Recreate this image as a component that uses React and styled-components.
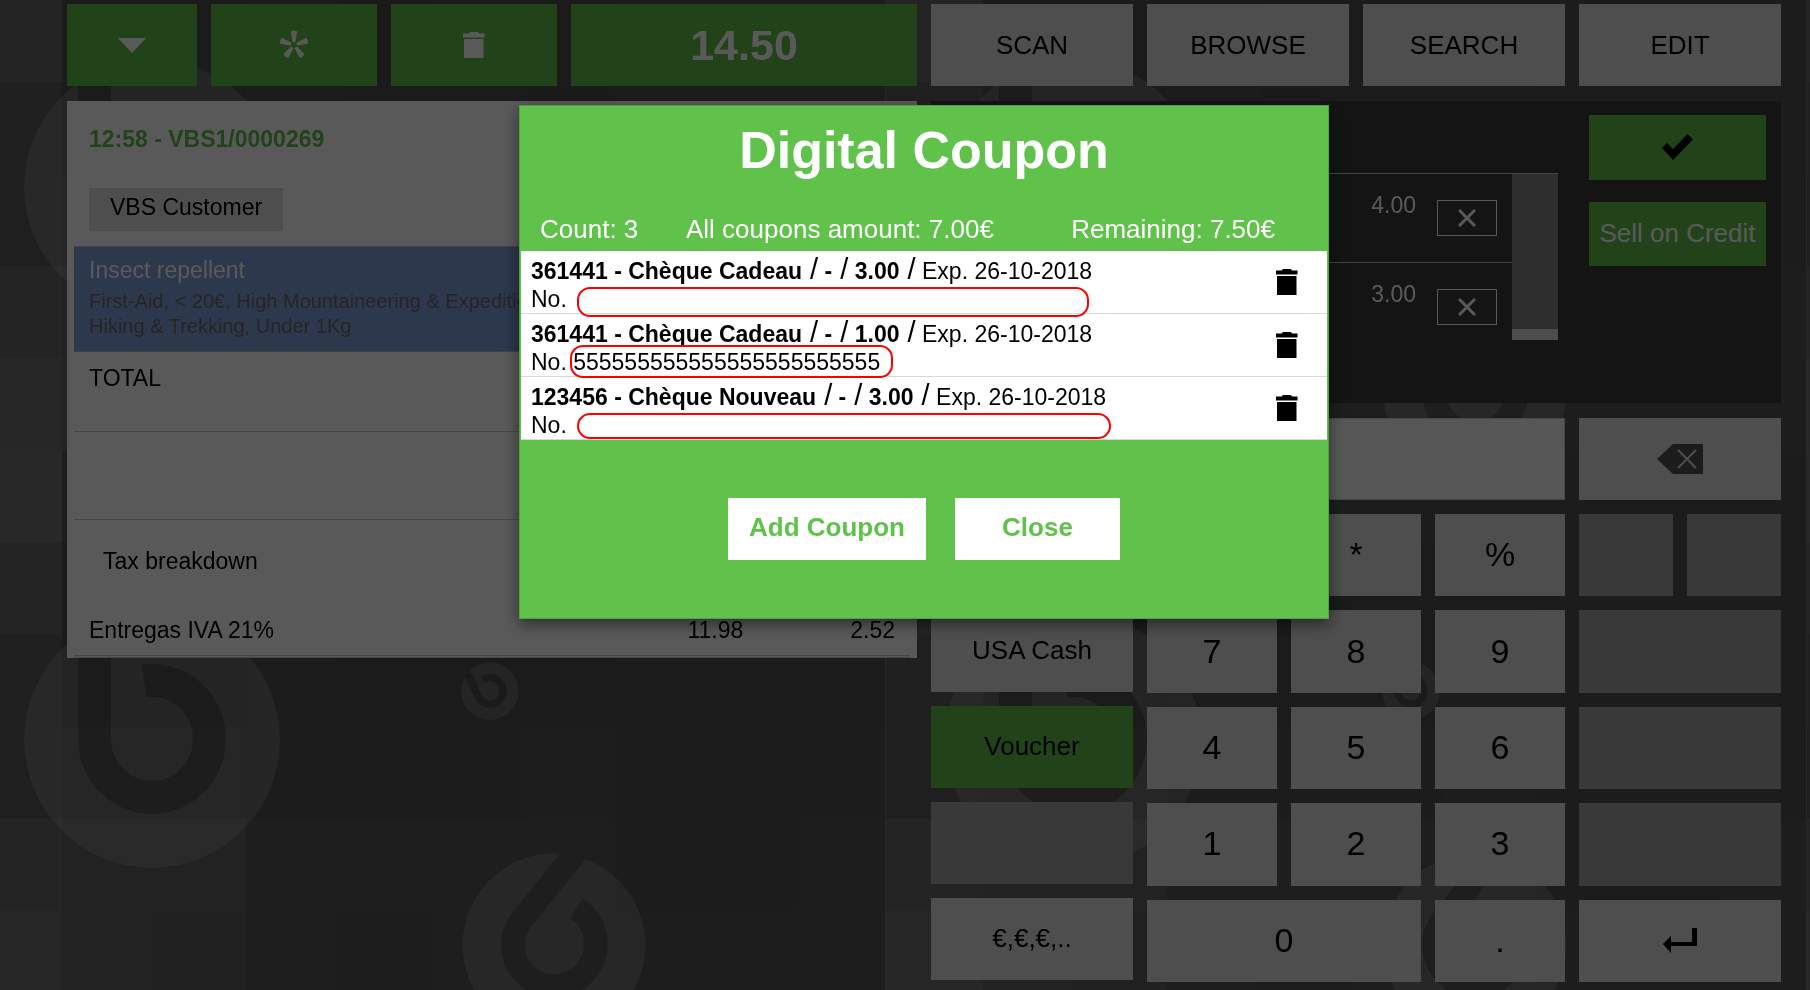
import React from "react";
import styled, { createGlobalStyle, css } from "styled-components";

const tiles = [
  [103, 78, 78, 80, 76, 77, 78, 81, 81, 81],
  [92, 79, 79, 82, 77, 77, 77, 81, 81, 81],
  [89, 84, 84, 80, 81, 81, 84, 81, 81, 82],
  [103, 98, 98, 87, 86, 86, 88, 82, 82, 83],
  [113, 97, 94, 87, 84, 88, 88, 85, 84, 84],
  [114, 84, 84, 82, 82, 80, 80, 81, 81, 82],
];

const columnStarts = [0, 98, 190, 282, 374, 466, 559, 651, 743, 835, 921];
const rowStarts = [0, 92, 184, 276, 368, 461, 553];

const logos = [
  { x: 188, y: 197, scale: 1, rotate: 0 },
  { x: 526, y: 148, scale: 0.226, rotate: -25 },
  { x: 590, y: 402, scale: 0.715, rotate: 39 },
];

const methods = [
  { label: "", muted: true },
  { label: "USA Cash" },
  { label: "Voucher", active: true },
  { label: "", muted: true },
  { label: "€,€,€,.." },
];

const digits = ["", "*", "%", "7", "8", "9", "4", "5", "6", "1", "2", "3"];

const coupons = [
  {
    code: "361441",
    name: "Chèque Cadeau",
    amount: "3.00",
    number: "",
    mark: { left: 56, top: 36, width: 512, height: 30 },
  },
  {
    code: "361441",
    name: "Chèque Cadeau",
    amount: "1.00",
    number: "555555555555555555555555",
    mark: { left: 49, top: 31, width: 323, height: 33 },
  },
  {
    code: "123456",
    name: "Chèque Nouveau",
    amount: "3.00",
    number: "",
    mark: { left: 56, top: 36, width: 534, height: 26 },
  },
];

const Wallpaper = () => (
  <StyledWallpaper aria-hidden="true">
    <defs>
      <mask id="logo-mask">
        <circle r="128" fill="#fff" />
        <path d="M-57.5 -140V0A57.5 58.5 0 1 0 -8 -59" fill="none" stroke="#000" strokeWidth="33" />
      </mask>
      <pattern
        id="tiles"
        width="921"
        height="553"
        patternUnits="userSpaceOnUse"
        patternTransform="translate(-36 -10)"
      >
        {tiles.map((row, r) =>
          row.map((shade, c) => (
            <rect
              key={`${r}-${c}`}
              x={columnStarts[c]}
              y={rowStarts[r]}
              width={columnStarts[c + 1] - columnStarts[c]}
              height={rowStarts[r + 1] - rowStarts[r]}
              fill={`rgb(${shade}, ${shade}, ${shade})`}
            />
          ))
        )}
        <rect width="1" height="553" fill="#707070" />
        {logos.map(({ x, y, scale, rotate }) => (
          <g key={x} transform={`translate(${x} ${y}) rotate(${rotate}) scale(${scale})`}>
            <circle r="128" fill="#fff" fillOpacity="0.15" mask="url(#logo-mask)" />
          </g>
        ))}
      </pattern>
    </defs>
    <rect width="100%" height="100%" fill="url(#tiles)" />
  </StyledWallpaper>
);

const TrashIcon = () => (
  <svg width="22" height="26" viewBox="0 0 22 26" fill="currentColor">
    <path d="M6 1L7 0H15L16 1.500H21.500V5.500H0V1.500H6Z" />
    <path d="M1 7H20.500V26H1Z" />
  </svg>
);

const AsteriskIcon = () => (
  <svg width="28" height="30" viewBox="-14 -15 28 30" fill="currentColor">
    {[0, 72, 144, 216, 288].map((angle) => (
      <path key={angle} d="M-1.500 -3L-3 -13Q-3 -14.500 0 -14.500Q3 -14.500 3 -13L1.500 -3Z" transform={`rotate(${angle})`} />
    ))}
  </svg>
);

const CrossIcon = () => (
  <svg width="18" height="18" viewBox="0 0 18 18" stroke="currentColor" strokeWidth="3">
    <path d="M1 1L17 17M17 1L1 17" />
  </svg>
);

const App = () => {
  return (
    <>
      <GlobalStyle />
      <Wallpaper />
      <Page>
        <Column>
          <ReceiptToolbar>
            <GreenButton aria-label="Menu">
              <svg width="28" height="15" viewBox="0 0 28 15" fill="currentColor">
                <path d="M0 0H28L14 15Z" />
              </svg>
            </GreenButton>
            <GreenButton aria-label="New">
              <AsteriskIcon />
            </GreenButton>
            <GreenButton aria-label="Delete">
              <TrashIcon />
            </GreenButton>
            <GreenButton $total>14.50</GreenButton>
          </ReceiptToolbar>

          <Receipt>
            <ReceiptHeader>
              <ReceiptTitle>12:58 - VBS1/0000269</ReceiptTitle>
              <Customer>VBS Customer</Customer>
            </ReceiptHeader>
            <Product>
              <ProductName>Insect repellent</ProductName>
              <ProductTags>
                First-Aid, &lt; 20€, High Mountaineering &amp; Expedition,
                <br />
                Hiking &amp; Trekking, Under 1Kg
              </ProductTags>
            </Product>
            <Total>TOTAL</Total>
            <Spacer />
            <TaxTitle>Tax breakdown</TaxTitle>
            <TaxTable>
              <tbody>
                <tr>
                  <td>Entregas IVA 21%</td>
                  <td>11.98</td>
                  <td>2.52</td>
                </tr>
              </tbody>
            </TaxTable>
          </Receipt>
        </Column>

        <Column>
          <Tabs>
            <Key>SCAN</Key>
            <Key>BROWSE</Key>
            <Key>SEARCH</Key>
            <Key>EDIT</Key>
          </Tabs>

          <Payment>
            <PaymentLines>
              <PaymentList>
                {["4.00", "3.00"].map((amount) => (
                  <PaymentLine key={amount}>
                    <span>{amount}</span>
                    <RemoveButton aria-label="Remove payment">
                      <CrossIcon />
                    </RemoveButton>
                  </PaymentLine>
                ))}
              </PaymentList>
              <ScrollTrack />
            </PaymentLines>
            <PaymentActions>
              <GreenButton $dark aria-label="Done">
                <svg width="31" height="26" viewBox="0 0 31 26" fill="currentColor">
                  <path d="M0 14L5 9L11 15L25.500 0L31 5.500L11 26Z" />
                </svg>
              </GreenButton>
              <GreenButton>Sell on Credit</GreenButton>
            </PaymentActions>
          </Payment>

          <Keyboard>
            <AmountInput aria-label="Amount" />
            <Key aria-label="Backspace">
              <svg width="46" height="30" viewBox="0 0 46 30">
                <path d="M0 15L16 0H46V30H16Z" fill="#525252" />
                <path d="M21 6L39 24M39 6L21 24" stroke="#dedede" strokeWidth="2" />
              </svg>
            </Key>
            <Methods>
              {methods.map(({ label, muted, active }, i) => (
                <Key key={i} $muted={muted} $active={active}>
                  {label}
                </Key>
              ))}
            </Methods>
            <Digits>
              {digits.map((digit, i) => (
                <Key key={i} $digit>
                  {digit}
                </Key>
              ))}
              <Key $digit $span={2}>
                0
              </Key>
              <Key $digit>.</Key>
            </Digits>
            <Operations>
              <Key $muted />
              <Key $muted />
              <Key $muted $span={2} />
              <Key $muted $span={2} />
              <Key $muted $span={2} />
              <Key $span={2} aria-label="Enter">
                <svg width="34" height="25" viewBox="0 0 34 25">
                  <path d="M8 14H29V0H34V18H8V25L0 16L8 8Z" fill="currentColor" />
                </svg>
              </Key>
            </Operations>
          </Keyboard>
        </Column>
      </Page>

      <Backdrop>
        <Modal role="dialog" aria-modal="true" aria-labelledby="coupon-title">
          <ModalTitle id="coupon-title">Digital Coupon</ModalTitle>
          <Summary>
            <span>Count: 3</span>
            <span>All coupons amount: 7.00€</span>
            <span>Remaining: 7.50€</span>
          </Summary>
          <CouponList>
            {coupons.map(({ code, name, amount, number, mark }, i) => (
              <Coupon key={i}>
                <div>
                  <div>
                    <b>
                      {code} - {name}
                    </b>
                    <Slash> /</Slash> <b>-</b>
                    <Slash> /</Slash> <b>{amount}</b>
                    <Slash> /</Slash> Exp. 26-10-2018
                  </div>
                  <div>No. {number}</div>
                </div>
                <DeleteButton aria-label="Delete coupon">
                  <TrashIcon />
                </DeleteButton>
                <Mark $box={mark} />
              </Coupon>
            ))}
          </CouponList>
          <ModalActions>
            <ModalButton>Add Coupon</ModalButton>
            <ModalButton>Close</ModalButton>
          </ModalActions>
        </Modal>
      </Backdrop>
    </>
  );
};

const GlobalStyle = createGlobalStyle`
  * {
    box-sizing: border-box;
  }

  body {
    margin: 0;
    background: #535353;
    color: #000;
    font-family: "Liberation Sans", Arial, sans-serif;
    font-size: 23px;
    line-height: 28px;
  }

  button,
  input {
    border: 0;
    border-radius: 0;
    padding: 0;
    font: inherit;
    color: inherit;
  }

  svg {
    display: block;
  }
`;

const StyledWallpaper = styled.svg`
  position: fixed;
  inset: 0;
  z-index: -1;
  width: 100%;
  height: 100%;
`;

const Page = styled.main`
  display: grid;
  grid-template-columns: 1fr 1fr;
  gap: 14px;
  padding: 4px 29px 8px 67px;
`;

const Column = styled.section`
  display: flex;
  flex-direction: column;
  gap: 15px;
  min-width: 0;
`;

const buttonBase = css`
  display: flex;
  align-items: center;
  justify-content: center;
  min-width: 0;
  font-size: 26px;
  line-height: 30px;
`;

const GreenButton = styled.button`
  ${buttonBase}
  background: #61bf4b;
  color: ${({ $dark }) => ($dark ? "#000" : "#fff")};

  ${({ $total }) =>
    $total &&
    css`
      font-size: 43px;
      font-weight: bold;
      line-height: 50px;
    `}
`;

const ReceiptToolbar = styled.div`
  display: grid;
  grid-template-columns: 130fr 166fr 166fr 346fr;
  grid-auto-rows: 82px;
  gap: 14px;
`;

const Receipt = styled.div`
  padding: 0 7px;
  background: #fff;
`;

const ReceiptHeader = styled.div`
  display: flex;
  flex-direction: column;
  align-items: flex-start;
  gap: 35px;
  padding: 24px 15px 15px;
`;

const ReceiptTitle = styled.div`
  color: #61bf4b;
  font-weight: bold;
`;

const Customer = styled.button`
  height: 43px;
  padding: 0 21px 5px;
  background: #e0e0e0;
`;

const Product = styled.div`
  height: 106px;
  padding: 9px 15px 0;
  border-top: 1px solid #bbb;
  border-bottom: 1px solid #bbb;
  background: #80a0dc;
  color: #6b6b6b;
`;

const ProductName = styled.div`
  color: #fff;
`;

const ProductTags = styled.div`
  padding-top: 5px;
  font-size: 20px;
  line-height: 25px;
`;

const Total = styled.div`
  height: 80px;
  padding: 12px 15px;
  border-bottom: 1px solid #c8c8c8;
`;

const Spacer = styled.div`
  height: 88px;
  border-bottom: 1px solid #c8c8c8;
`;

const TaxTitle = styled.div`
  padding: 27px 29px 22px;
`;

const TaxTable = styled.table`
  width: 100%;
  border-bottom: 3px double #c8c8c8;
  border-spacing: 0;

  td {
    height: 58px;
    padding: 8px 15px 0;
    text-align: right;
  }

  td:first-child {
    width: 61%;
    text-align: left;
  }
`;

const Tabs = styled.div`
  display: grid;
  grid-template-columns: repeat(4, 1fr);
  grid-auto-rows: 82px;
  gap: 14px;
`;

const Key = styled.button`
  ${buttonBase}
  background: rgba(230, 230, 230, 0.95);
  grid-column: span ${({ $span = 1 }) => $span};

  ${({ $digit }) =>
    $digit &&
    css`
      font-size: 34px;
      line-height: 40px;
    `}

  ${({ $muted }) =>
    $muted &&
    css`
      background: #a4a4a4;
    `}

  ${({ $active }) =>
    $active &&
    css`
      background: #61bf4b;
    `}
`;

const Payment = styled.div`
  display: grid;
  grid-template-columns: 1fr 177px;
  gap: 31px;
  height: 302px;
  padding: 14px 15px 0;
  background: #393939;
`;

const PaymentLines = styled.div`
  display: flex;
  align-self: start;
  height: 167px;
  margin-top: 58px;
  border-top: 1px solid #c8c8c8;
`;

const PaymentList = styled.div`
  flex: 1;
`;

const PaymentLine = styled.div`
  display: flex;
  justify-content: flex-end;
  align-items: flex-start;
  gap: 21px;
  height: 89px;
  padding: 17px 15px 0 0;
  border-bottom: 1px solid #c8c8c8;
  color: #fff;

  &:last-child {
    border-bottom: 0;
  }
`;

const RemoveButton = styled.button`
  display: flex;
  align-items: center;
  justify-content: center;
  width: 60px;
  height: 36px;
  margin-top: 9px;
  border: 1px solid #fff;
  background: none;
`;

const ScrollTrack = styled.div`
  width: 46px;
  border-bottom: 11px solid #dcdcdc;
  background: #848484;
`;

const PaymentActions = styled.div`
  display: grid;
  grid-template-rows: 65px 64px;
  align-content: start;
  gap: 22px;

  button {
    padding-bottom: 2px;
  }
`;

const Keyboard = styled.div`
  display: grid;
  grid-template-columns: repeat(4, 1fr);
  grid-template-rows: 82px 468px;
  gap: 14px;
`;

const AmountInput = styled.input`
  grid-column: span 3;
  width: 100%;
  border: 1px solid #ccc;
  background: rgba(255, 255, 255, 0.97);
`;

const Methods = styled.div`
  display: grid;
  grid-auto-rows: 82px;
  align-content: start;
  gap: 14px;

  button {
    padding-bottom: 2px;
  }
`;

const Digits = styled.div`
  display: grid;
  grid-column: span 2;
  grid-template-columns: repeat(3, 1fr);
  grid-auto-rows: 1fr;
  gap: 14px;

  button {
    padding-bottom: 2px;
  }
`;

const Operations = styled.div`
  display: grid;
  grid-template-columns: 1fr 1fr;
  grid-auto-rows: 1fr;
  gap: 14px;
`;

const Backdrop = styled.div`
  position: fixed;
  inset: 0;
  display: flex;
  align-items: flex-start;
  justify-content: center;
  padding: 105px 29px 0 67px;
  background: rgba(0, 0, 0, 0.65);
`;

const Modal = styled.div`
  width: 810px;
  padding: 14px 1px 58px;
  border: 1px solid #4fa53c;
  background: #60c24a;
  box-shadow: 0 5px 15px rgba(0, 0, 0, 0.5);
`;

const ModalTitle = styled.h1`
  margin: 0;
  color: #fff;
  font-size: 52px;
  line-height: 60px;
  text-align: center;
`;

const Summary = styled.div`
  display: grid;
  grid-template-columns: 146px 1fr auto;
  padding: 34px 52px 7px 19px;
  color: #fff;
  font-size: 26px;
  line-height: 30px;
`;

const CouponList = styled.ul`
  margin: 0;
  padding: 0;
  background: #fff;
  list-style: none;
`;

const Coupon = styled.li`
  position: relative;
  display: flex;
  justify-content: space-between;
  height: 63px;
  padding: 6px 29px 0 10px;
  border-bottom: 1px solid #d8d8d8;
`;

const Slash = styled.span`
  font-size: 29px;
  line-height: 20px;
`;

const DeleteButton = styled.button`
  align-self: flex-start;
  margin-top: 12px;
  background: none;
`;

/* red outline drawn round the coupon number */
const Mark = styled.div`
  position: absolute;
  left: ${({ $box }) => $box.left}px;
  top: ${({ $box }) => $box.top}px;
  width: ${({ $box }) => $box.width}px;
  height: ${({ $box }) => $box.height}px;
  border: 2px solid #f00;
  border-radius: 13px;
  pointer-events: none;
`;

const ModalActions = styled.div`
  display: flex;
  justify-content: center;
  gap: 29px;
  padding-top: 58px;
`;

const ModalButton = styled.button`
  min-width: 165px;
  height: 62px;
  padding: 0 21px 4px;
  background: #fff;
  color: #60c24a;
  font-size: 26px;
  font-weight: bold;
  line-height: 30px;
`;

export default App;
